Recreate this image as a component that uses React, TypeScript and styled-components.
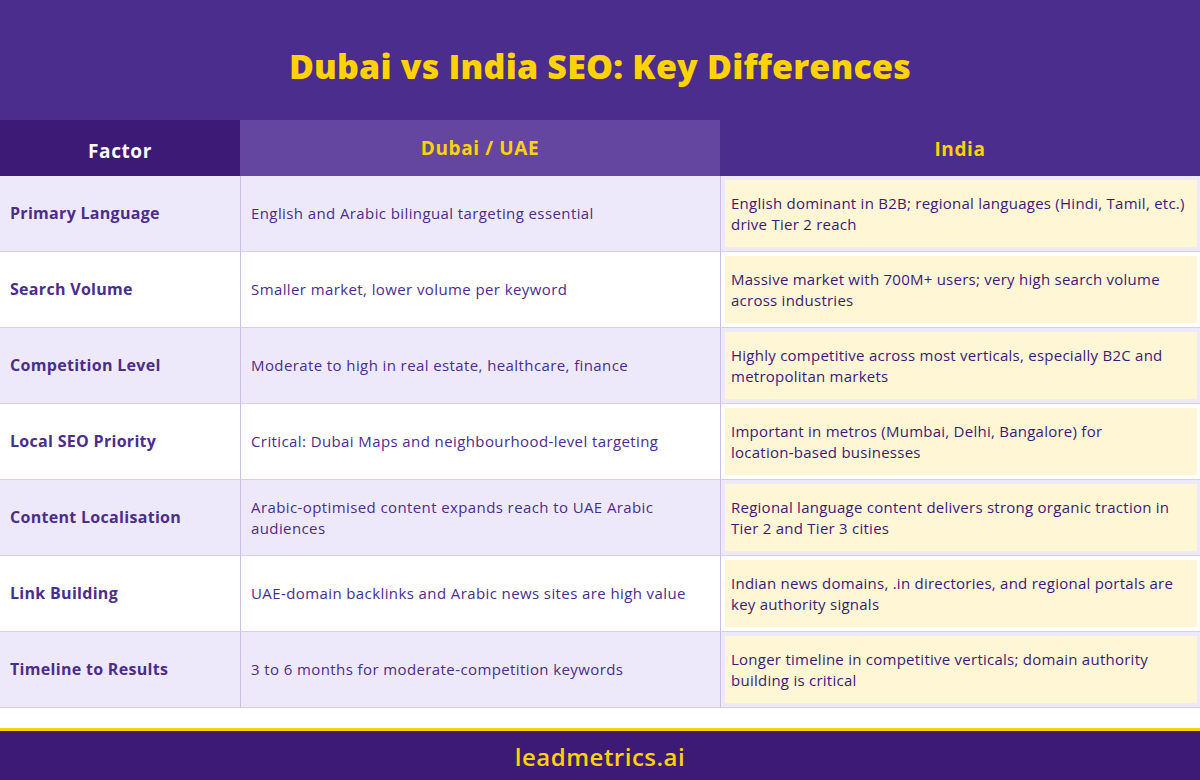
import styled, { createGlobalStyle } from "styled-components";

interface IRow {
  factor: string;
  dubai: string;
  india: string;
}

// "location‑based" uses a non-breaking hyphen so it wraps as one word
const rows: IRow[] = [
  {
    factor: "Primary Language",
    dubai: "English and Arabic bilingual targeting essential",
    india:
      "English dominant in B2B; regional languages (Hindi, Tamil, etc.) drive Tier 2 reach",
  },
  {
    factor: "Search Volume",
    dubai: "Smaller market, lower volume per keyword",
    india:
      "Massive market with 700M+ users; very high search volume across industries",
  },
  {
    factor: "Competition Level",
    dubai: "Moderate to high in real estate, healthcare, finance",
    india:
      "Highly competitive across most verticals, especially B2C and metropolitan markets",
  },
  {
    factor: "Local SEO Priority",
    dubai: "Critical: Dubai Maps and neighbourhood-level targeting",
    india:
      "Important in metros (Mumbai, Delhi, Bangalore) for location\u2011based businesses",
  },
  {
    factor: "Content Localisation",
    dubai: "Arabic-optimised content expands reach to UAE Arabic audiences",
    india:
      "Regional language content delivers strong organic traction in Tier 2 and Tier 3 cities",
  },
  {
    factor: "Link Building",
    dubai: "UAE-domain backlinks and Arabic news sites are high value",
    india:
      "Indian news domains, .in directories, and regional portals are key authority signals",
  },
  {
    factor: "Timeline to Results",
    dubai: "3 to 6 months for moderate-competition keywords",
    india:
      "Longer timeline in competitive verticals; domain authority building is critical",
  },
];

const GlobalStyle = createGlobalStyle`
  body {
    margin: 0;
    font-family: "Open Sans", "Noto Sans", sans-serif;
    background: #ffffff;
  }
`;

export default function App() {
  return (
    <>
      <GlobalStyle />
      <Page>
        <TitleBar>
          <Title>Dubai vs India SEO: Key Differences</Title>
        </TitleBar>

        <Table>
          <HeadCell tone="dark" offset={6}>
            <HeadText color="#ffffff">Factor</HeadText>
          </HeadCell>
          <HeadCell tone="light" offset={0}>
            <HeadText color="#ffd200">Dubai / UAE</HeadText>
          </HeadCell>
          <HeadCell tone="mid" offset={2}>
            <HeadText color="#ffd200">India</HeadText>
          </HeadCell>

          {rows.map((row, index) => (
            <Row key={row.factor} striped={index % 2 === 0}>
              <FactorCell>{row.factor}</FactorCell>
              <BodyCell>{row.dubai}</BodyCell>
              <IndiaCell>
                <IndiaBox>{row.india}</IndiaBox>
              </IndiaCell>
            </Row>
          ))}
        </Table>

        <Footer>
          <Brand>leadmetrics.ai</Brand>
        </Footer>
      </Page>
    </>
  );
}

const Page = styled.div`
  width: 1200px;
  height: 780px;
  display: flex;
  flex-direction: column;
  overflow: hidden;
`;

const TitleBar = styled.div`
  height: 120px;
  background: #4a2d8c;
  display: flex;
  align-items: center;
  justify-content: center;
`;

const Title = styled.h1`
  margin: 0;
  font-size: 34px;
  font-weight: 800;
  color: #ffd200;
  letter-spacing: 0.2px;
  transform: translateY(6px);
`;

const Table = styled.div`
  display: grid;
  grid-template-columns: 240px 480px 480px;
  grid-template-rows: 56px;
  grid-auto-rows: 76px;
`;

const headBg = {
  dark: "#3d1a75",
  light: "#6446a0",
  mid: "#4a2d8c",
};

const HeadCell = styled.div<{ tone: keyof typeof headBg; offset: number }>`
  background: ${(p) => headBg[p.tone]};
  display: flex;
  align-items: center;
  justify-content: center;
  padding-top: ${(p) => p.offset}px;
`;

const HeadText = styled.span<{ color: string }>`
  color: ${(p) => p.color};
  font-size: 19px;
  font-weight: 700;
  letter-spacing: 0.6px;
`;

const Row = styled.div<{ striped: boolean }>`
  display: contents;

  & > div {
    background: ${(p) => (p.striped ? "#eee9fa" : "#ffffff")};
    border-bottom: 1px solid #d8cdef;
  }
`;

const Cell = styled.div`
  display: flex;
  align-items: center;
  box-sizing: border-box;
  font-size: 15px;
  line-height: 21px;
  letter-spacing: 0.4px;
  color: #4a2d8c;
`;

const FactorCell = styled(Cell)`
  padding: 0 10px;
  font-weight: 700;
  font-size: 16px;
  letter-spacing: 0.3px;
`;

const BodyCell = styled(Cell)`
  padding: 0 10px;
  border-left: 1px solid #cabfe5;
`;

const IndiaCell = styled(Cell)`
  padding: 4px 3px 4px 4px;
  border-left: 1px solid #cabfe5;
  align-items: stretch;
`;

const IndiaBox = styled.div`
  flex: 1;
  display: flex;
  align-items: center;
  padding: 0 6px;
  background: #fff6d5;
  color: #3d1a75;
  letter-spacing: 0.25px;
`;

const Footer = styled.div`
  margin-top: 20px;
  flex: 1;
  border-top: 3px solid #ffd200;
  background: #3d1a75;
  display: flex;
  align-items: center;
  justify-content: center;
`;

const Brand = styled.span`
  color: #ffd200;
  font-size: 24px;
  font-weight: 600;
  letter-spacing: 0.5px;
  transform: translateY(1px);
`;
